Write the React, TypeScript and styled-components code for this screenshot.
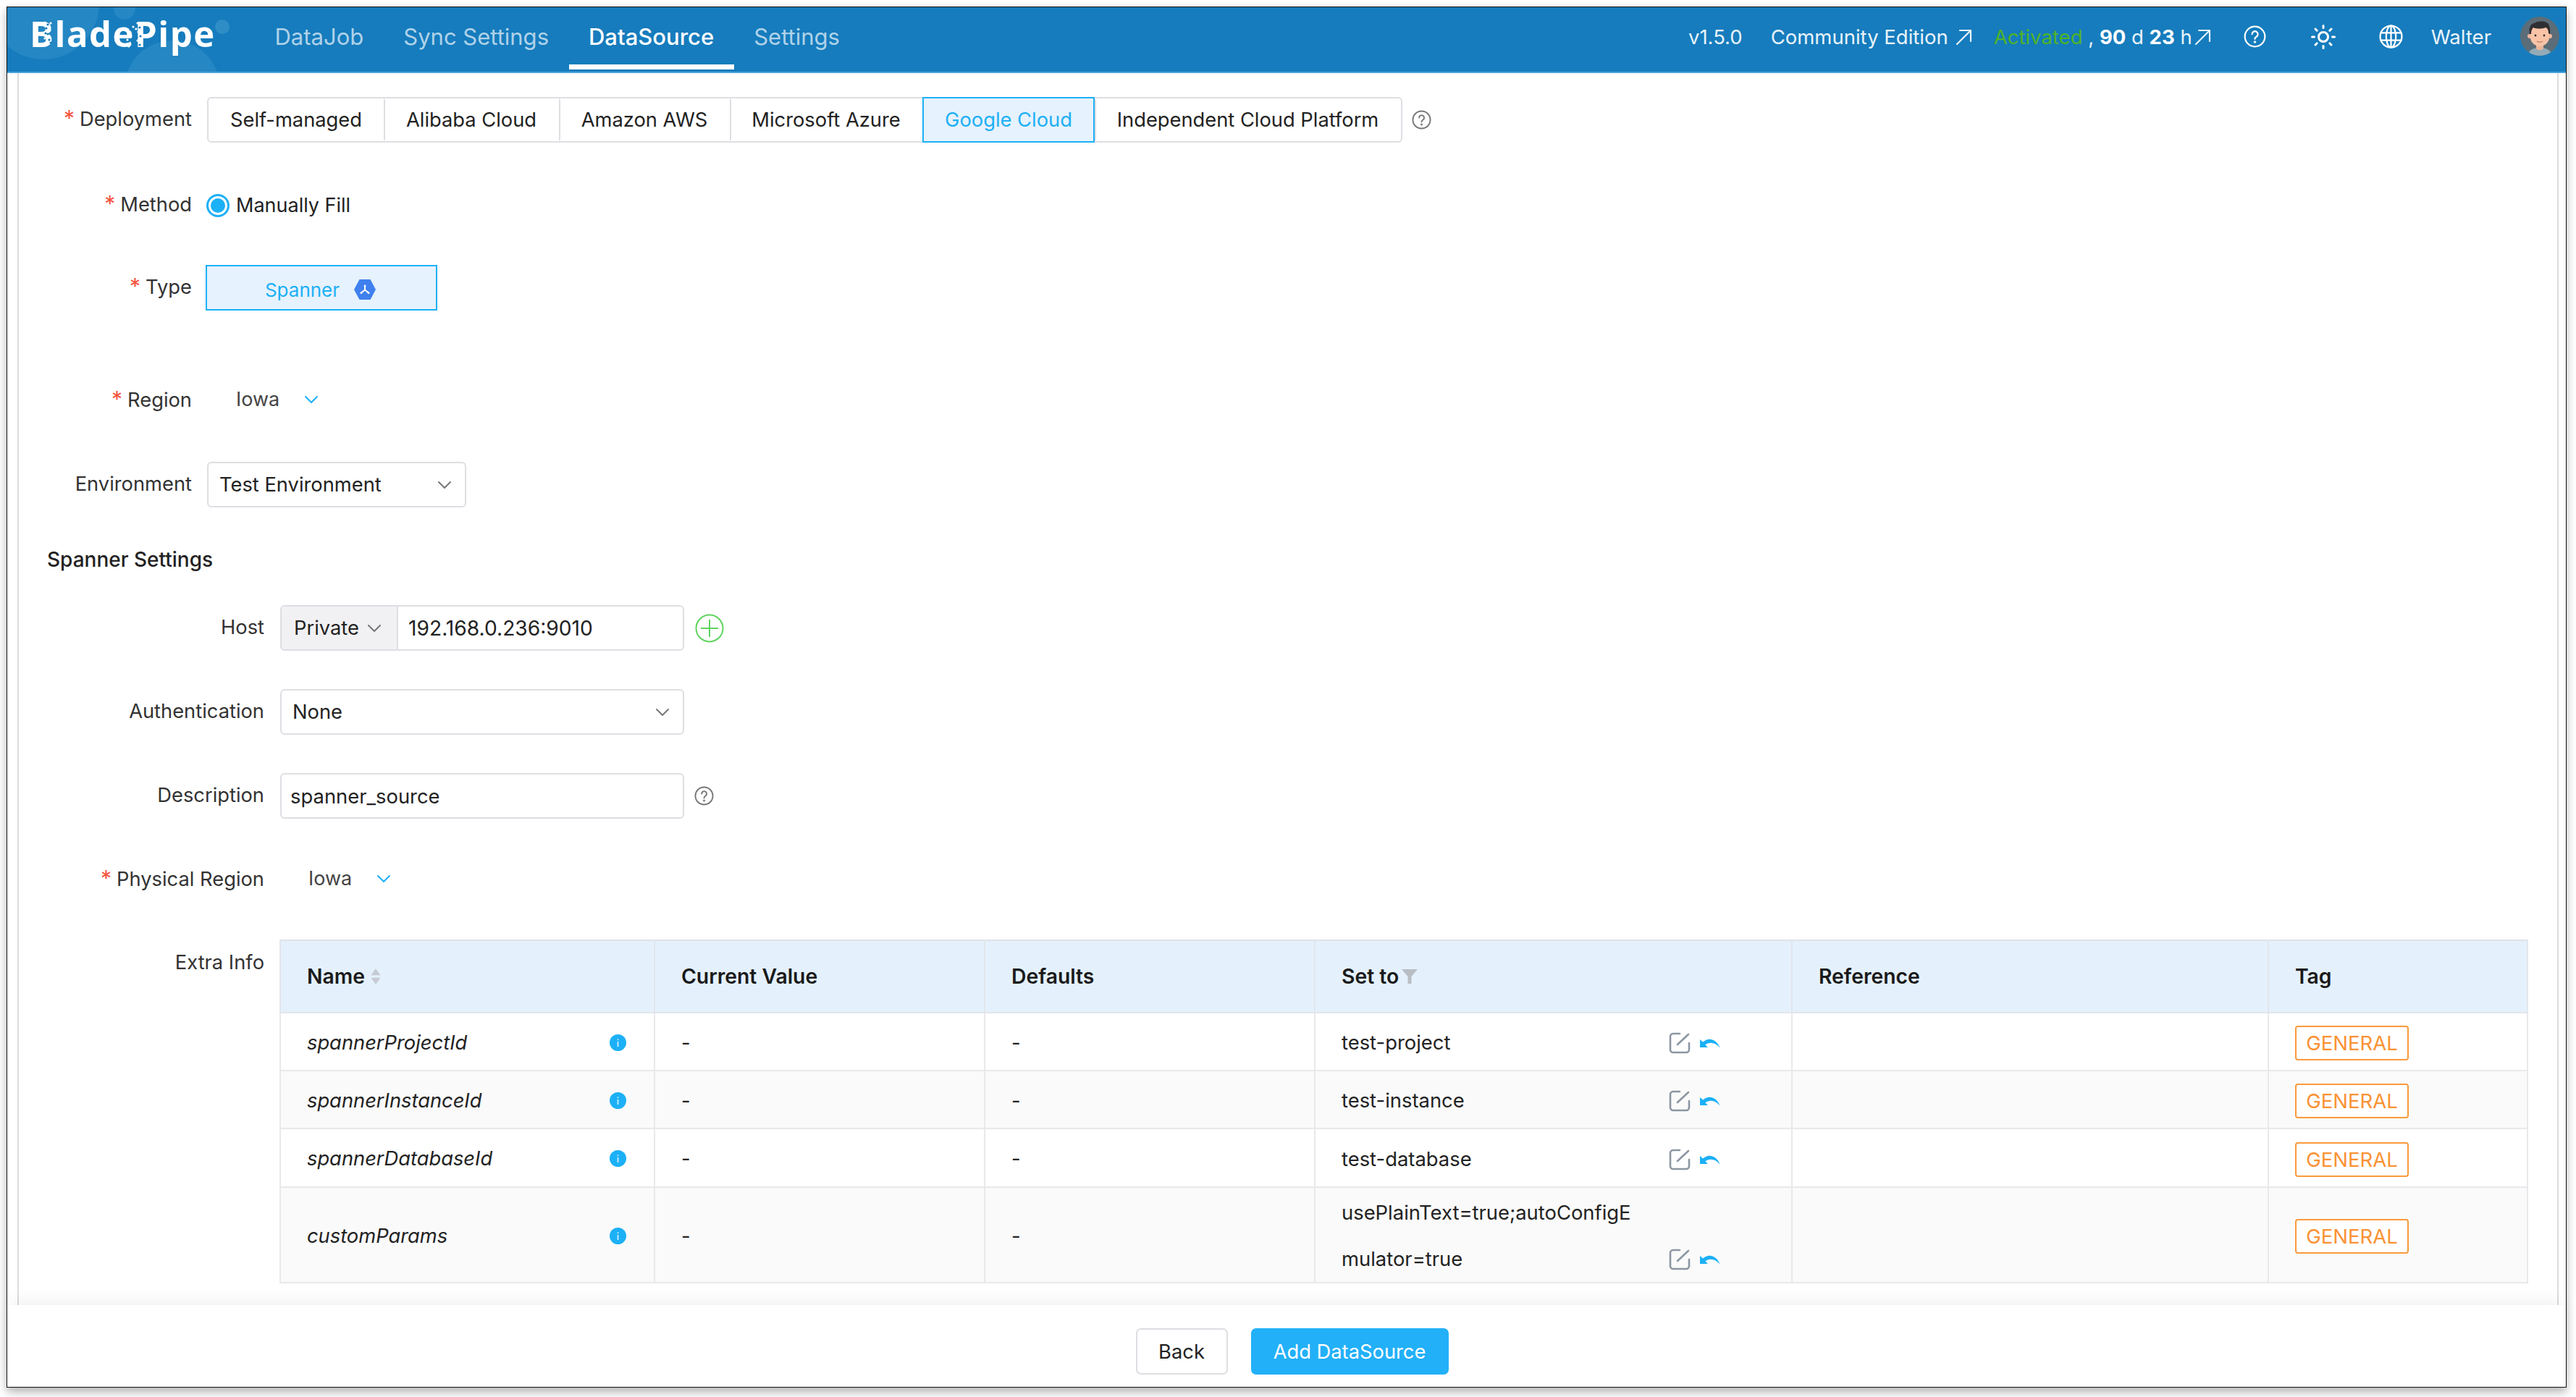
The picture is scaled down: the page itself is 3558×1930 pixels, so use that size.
import React from "react";
import styled, { createGlobalStyle } from "styled-components";

const GlobalStyle = createGlobalStyle`
  html, body { margin: 0; padding: 0; background: #fff; }
  body { width: 3558px; height: 1930px; overflow: hidden; font-family: Inter, "Liberation Sans", sans-serif; color: #222; }
  * { box-sizing: border-box; }
`;

const Page = styled.div`
  width: 3558px;
  height: 1930px;
  padding: 9px 13px 13px 9px;
`;

const Windowed = styled.div`
  width: 100%;
  height: 100%;
  display: flex;
  flex-direction: column;
  background: #fff;
  border: 1px solid #111;
  box-shadow: 0 6px 12px rgba(0, 0, 0, 0.3);
`;

const Header = styled.header`
  position: relative;
  height: 91px;
  flex: none;
  display: flex;
  align-items: flex-start;
  background: #167cbd;
  border-bottom: 2px solid #4ba3dc;
  color: #fff;
  overflow: hidden;
`;

const LogoArt = styled.svg`
  position: absolute;
  left: 0;
  top: 0;
  width: 340px;
  height: 90px;
`;

const Logo = styled.div`
  position: relative;
  width: 340px;
  height: 89px;
  padding: 6px 0 0 31px;
  flex: none;
  font-family: "Open Sans", sans-serif;
  font-weight: 700;
  font-size: 49px;
  letter-spacing: 1.5px;
  line-height: 60px;
  color: #fff;
`;

const LogoSpecks = styled.svg`
  position: absolute;
  left: 0;
  top: 0;
  width: 340px;
  height: 90px;
`;

const Nav = styled.nav`
  position: relative;
  display: flex;
  margin-left: 2px;
`;

const NavItem = styled.div<{ $active?: boolean }>`
  height: 86px;
  padding: 2px 27.5px 0;
  display: flex;
  align-items: center;
  font-size: 31px;
  font-weight: ${(p) => (p.$active ? 500 : 400)};
  color: ${(p) => (p.$active ? "#fff" : "#afd2e9")};
  border-bottom: 7px solid ${(p) => (p.$active ? "#fff" : "transparent")};
`;

const HeaderRight = styled.div`
  margin-left: auto;
  height: 89px;
  display: flex;
  align-items: center;
  padding: 0 9px 8px 0;
  font-size: 27.5px;
  color: #e8f3fa;
`;

const Version = styled.span`
  margin-right: 39px;
`;

const Edition = styled.span`
  display: flex;
  align-items: center;
  gap: 9px;
  margin-right: 30px;
`;

const License = styled.span`
  display: flex;
  align-items: center;
  gap: 2px;
  margin-right: 45px;
  white-space: pre;
  strong { font-weight: 700; color: #fff; }
  em { font-style: normal; color: #4fb327; }
`;

const HeaderIcon = styled.span<{ $gap: number }>`
  display: flex;
  margin-right: ${(p) => p.$gap}px;
  color: #fff;
`;

const UserName = styled.span`
  margin-right: 40px;
`;

const AvatarWrap = styled.span`
  display: flex;
  margin-top: -2px;
`;

const Main = styled.main`
  flex: 1;
  min-height: 0;
  margin: 0 10px 0 14px;
  border-left: 2px solid #dcdcdf;
  border-right: 2px solid #dcdcdf;
  padding-top: 33px;
  overflow: hidden;
`;

const Row = styled.div<{ $after?: number }>`
  display: flex;
  align-items: center;
  height: 63px;
  margin-bottom: ${(p) => p.$after ?? 53}px;
`;

const Label = styled.label<{ $wide?: boolean }>`
  flex: none;
  width: ${(p) => (p.$wide ? 339 : 239)}px;
  margin-right: ${(p) => (p.$wide ? 22 : 21)}px;
  margin-top: -2px;
  text-align: right;
  font-size: 27.3px;
  color: #333;
`;

const Star = styled.i`
  font-style: normal;
  font-size: 30px;
  line-height: 0;
  color: #f5533d;
  margin-right: 7px;
`;

const Segments = styled.div`
  display: flex;
  height: 63px;
  border: 2px solid #dedee3;
  border-radius: 6px;
`;

const Segment = styled.div<{ $on?: boolean; $w: number }>`
  width: ${(p) => p.$w}px;
  display: flex;
  align-items: center;
  justify-content: center;
  font-size: 27.3px;
  margin: ${(p) => (p.$on ? "-2px 0" : "0")};
  color: ${(p) => (p.$on ? "#1cb0f6" : "#222")};
  background: ${(p) => (p.$on ? "#e6f2fd" : "#fff")};
  border: 2px solid ${(p) => (p.$on ? "#1cb0f6" : "transparent")};
  border-left-color: ${(p) => (p.$on ? "#1cb0f6" : "#dedee3")};
  &:first-child { border-left-color: transparent; border-radius: 6px 0 0 6px; }
  &:last-child { border-radius: 0 6px 6px 0; }
`;

const Help = styled.span<{ $left: number }>`
  display: flex;
  margin-left: ${(p) => p.$left}px;
  color: #777;
`;

const RadioRing = styled.span`
  width: 32px;
  height: 32px;
  flex: none;
  margin-left: -1px;
  border-radius: 50%;
  border: 3px solid #1cb0f6;
  padding: 3px;
  &::after {
    content: "";
    display: block;
    width: 100%;
    height: 100%;
    border-radius: 50%;
    background: #1cb0f6;
  }
`;

const RadioText = styled.span`
  margin-left: 9px;
  font-size: 27px;
`;

const TypeBox = styled.div`
  width: 320px;
  height: 63px;
  margin-left: -2px;
  display: flex;
  align-items: center;
  justify-content: center;
  gap: 19px;
  padding: 5px 2px 0 0;
  background: #e6f2fd;
  border: 2px solid #1cb0f6;
  color: #1cb0f6;
  font-size: 26px;
`;

const Inline = styled.div<{ $left: number }>`
  display: flex;
  align-items: center;
  gap: 34px;
  margin: -4px 0 0 ${(p) => p.$left}px;
  font-size: 27px;
  color: #444;
`;

const Select = styled.div<{ $w: number }>`
  width: ${(p) => p.$w}px;
  height: 63px;
  display: flex;
  align-items: center;
  justify-content: space-between;
  padding: 0 18px 0 15px;
  background: #fff;
  border: 2px solid #dedee3;
  border-radius: 6px;
  font-size: 27.3px;
  color: #222;
`;

const SectionTitle = styled.h3`
  margin: 0 0 43px 39px;
  height: 40px;
  line-height: 40px;
  font-size: 28px;
  font-weight: 500;
  color: #222;
`;

const HostGroup = styled.div`
  width: 558px;
  height: 63px;
  display: flex;
  border: 2px solid #dedee3;
  border-radius: 6px;
  overflow: hidden;
  font-size: 27.3px;
`;

const HostAddon = styled.div`
  width: 161px;
  display: flex;
  align-items: center;
  gap: 11px;
  padding-left: 17px;
  background: #f1f1f3;
  border-right: 2px solid #dedee3;
`;

const HostValue = styled.div`
  padding-left: 14px;
  display: flex;
  align-items: center;
  font-size: 28.2px;
`;

const TextField = styled.div`
  width: 558px;
  height: 63px;
  display: flex;
  align-items: center;
  padding-left: 12px;
  border: 2px solid #dedee3;
  border-radius: 6px;
  font-size: 27.4px;
`;

const ExtraRow = styled.div`
  display: flex;
  align-items: flex-start;
`;

const ExtraLabel = styled(Label)`
  padding-top: 17px;
`;

const Table = styled.table`
  width: 3104px;
  margin-left: -1px;
  table-layout: fixed;
  border-collapse: collapse;
  font-size: 27.3px;
  border-top: 2px solid #dfe2e7;
  border-bottom: 2px solid #dfe2e7;
`;

const Th = styled.th<{ $w: number }>`
  width: ${(p) => p.$w}px;
  height: 100px;
  padding: 0 36px;
  text-align: left;
  font-size: 28.3px;
  font-weight: 600;
  color: #1a1a1a;
  background: #e4f1fd;
  border: 2px solid #e2e5ea;
  border-top: none;
`;

const HeadInner = styled.span`
  display: flex;
  align-items: center;
  gap: 6px;
`;

const Tr = styled.tr<{ $h: number; $odd?: boolean }>`
  height: ${(p) => p.$h}px;
  background: ${(p) => (p.$odd ? "#fafafa" : "#fff")};
`;

const Td = styled.td`
  padding: 2px 36px 0;
  border: 2px solid #e9e9ec;
  color: #222;
`;

const NameInner = styled.div`
  display: flex;
  align-items: center;
  justify-content: space-between;
  padding-right: 2px;
  font-style: italic;
`;

const SetInner = styled.div`
  display: flex;
  align-items: flex-end;
`;

const SetValue = styled.span`
  width: 410px;
  line-height: 64px;
  word-break: break-all;
  flex: none;
  font-size: 27.4px;
`;

const SetActions = styled.span`
  height: 64px;
  margin-left: 42px;
  display: flex;
  align-items: center;
  gap: 13px;
  padding-top: 2px;
`;

const Tag = styled.span`
  display: inline-flex;
  align-items: center;
  justify-content: center;
  width: 157px;
  height: 48px;
  margin-top: 2px;
  border: 2px solid #fa9a3c;
  border-radius: 4px;
  color: #fa9233;
  font-size: 27.5px;
  background: #fff;
`;

const Footer = styled.footer`
  height: 113px;
  flex: none;
  position: relative;
  display: flex;
  align-items: flex-start;
  justify-content: center;
  gap: 32px;
  padding: 32px 0 0 15px;
  background: #fff;
  box-shadow: 0 -10px 22px -6px rgba(0, 0, 0, 0.07);
`;

const Button = styled.button<{ $primary?: boolean; $w: number }>`
  width: ${(p) => p.$w}px;
  height: 64px;
  font-family: inherit;
  font-size: 27.3px;
  border-radius: 7px;
  color: ${(p) => (p.$primary ? "#fff" : "#222")};
  background: ${(p) => (p.$primary ? "#22b0f8" : "#fff")};
  border: 2px solid ${(p) => (p.$primary ? "#22b0f8" : "#dedee3")};
`;

const Stroke = { fill: "none", stroke: "currentColor", strokeLinecap: "round", strokeLinejoin: "round" } as const;

const Chevron = ({ color = "#777", size = 20 }: { color?: string; size?: number }) => (
  <svg width={size} height={size * 0.6} viewBox="0 0 20 12">
    <path d="M2 2l8 8 8-8" fill="none" stroke={color} strokeWidth="2" strokeLinecap="round" strokeLinejoin="round" />
  </svg>
);

const HelpIcon = ({ size = 27, width = 2 }: { size?: number; width?: number }) => (
  <svg width={size} height={size} viewBox="0 0 28 28" {...Stroke} strokeWidth={width}>
    <circle cx="14" cy="14" r="12.5" />
    <path d="M10.5 11a3.6 3.6 0 1 1 5.6 3c-1.3.9-2.1 1.6-2.1 3" />
    <circle cx="14" cy="20.8" r="0.6" />
  </svg>
);

const ArrowOut = () => (
  <svg width="24" height="24" viewBox="0 0 24 24" {...Stroke} strokeWidth="2.2">
    <path d="M3 22L21 4M7 3h15v15" />
  </svg>
);

const Sun = () => (
  <svg width="34" height="34" viewBox="0 0 34 34" {...Stroke} strokeWidth="3">
    <circle cx="17" cy="17" r="6.5" />
    <path d="M17 1.5v3M17 29.5v3M1.5 17h3M29.5 17h3M6 6l2.2 2.2M25.8 25.8L28 28M6 28l2.2-2.2M25.8 8.2L28 6" />
  </svg>
);

const Globe = () => (
  <svg width="33" height="33" viewBox="0 0 32 32" {...Stroke} strokeWidth="2.2">
    <circle cx="16" cy="16" r="14.5" />
    <ellipse cx="16" cy="16" rx="6.5" ry="14.5" />
    <path d="M16 1.5v29M2.5 11h27M2.5 21h27" />
  </svg>
);

const Avatar = () => (
  <svg width="54" height="54" viewBox="0 0 54 54">
    <defs>
      <clipPath id="avatarClip"><circle cx="27" cy="27" r="27" /></clipPath>
    </defs>
    <g clipPath="url(#avatarClip)">
      <rect width="54" height="54" fill="#5b6d78" />
      <path d="M10 54c2-9 9-11 17-11s15 2 17 11z" fill="#93abb8" />
      <path d="M22 36h10v8c-2 3-8 3-10 0z" fill="#edb598" />
      <circle cx="13" cy="27" r="3" fill="#f2b69a" />
      <circle cx="41" cy="27" r="3" fill="#f2b69a" />
      <path d="M14 20c0-6 5-9 13-9s13 3 13 9v9c0 7-7 12-13 12s-13-5-13-12z" fill="#f8c3a6" />
      <path d="M13 24c-2-9 2-15 7-15 3-3 13-3 16-1 4 1 6 8 5 16l-2-1c0-4-1-7-4-8-5 2-13 2-17 0-2 2-3 5-3 9z" fill="#2f2f33" />
      <circle cx="21" cy="26" r="1.4" fill="#333" />
      <circle cx="33" cy="26" r="1.4" fill="#333" />
      <path d="M23 34c2 1.5 6 1.5 8 0" fill="none" stroke="#c97f63" strokeWidth="1.2" />
    </g>
  </svg>
);

const Hexagon = () => (
  <svg width="32" height="30" viewBox="0 0 32 30">
    <polygon points="8.5,1 23.5,1 31,15 23.5,29 8.5,29 1,15" fill="#3f80ee" />
    <path d="M16 10v5.5M16 15.5l-4.5 3.5M16 15.5l4.5 3.5" stroke="#fff" strokeWidth="2" fill="none" strokeLinecap="round" />
    <circle cx="16" cy="10" r="1.4" fill="#fff" />
    <circle cx="11" cy="19.5" r="1.5" fill="#fff" />
    <circle cx="21" cy="19.5" r="1.5" fill="#fff" />
  </svg>
);

const PlusCircle = () => (
  <svg width="40" height="40" viewBox="0 0 40 40" fill="none" stroke="#5fd35f" strokeWidth="2">
    <circle cx="20" cy="20" r="18.5" />
    <path d="M20 8v24M8 20h24" />
  </svg>
);

const InfoDot = () => (
  <svg width="23" height="23" viewBox="0 0 23 23">
    <circle cx="11.5" cy="11.5" r="11.5" fill="#1cb0f6" />
    <rect x="10.6" y="10" width="1.8" height="7" fill="#cfeefd" />
    <rect x="10.6" y="6.4" width="1.8" height="1.8" fill="#cfeefd" />
  </svg>
);

const SortCaret = () => (
  <svg width="18" height="24" viewBox="0 0 16 22">
    <path d="M8 1l6 8.5H2zM8 21l-6-8.5h12z" fill="#c7cbd1" />
  </svg>
);

const Funnel = () => (
  <svg width="24" height="24" viewBox="0 0 24 24" style={{ marginLeft: -3 }}>
    <path d="M1 2h22l-8.5 10v10h-5V12z" fill="#b9bdc4" />
  </svg>
);

const EditIcon = () => (
  <svg width="30" height="30" viewBox="0 0 30 30" fill="none" stroke="#8c96a3" strokeWidth="2.6" strokeLinecap="round">
    <path d="M15 2H6a4 4 0 0 0-4 4v18a4 4 0 0 0 4 4h18a4 4 0 0 0 4-4V15" />
    <path d="M12 17L27 3" />
  </svg>
);

const UndoIcon = () => (
  <svg width="28" height="14" viewBox="0 0 28 14">
    <path d="M0 2v11h11L7.4 9.4C13 5.2 21 6 27.5 13.5 24.5 4 13.5-3 4 5.6z" fill="#1cb0f6" />
  </svg>
);

const deployments: [string, number, boolean?][] = [
  ["Self-managed", 242],
  ["Alibaba Cloud", 242],
  ["Amazon AWS", 236],
  ["Microsoft Azure", 266],
  ["Google Cloud", 238, true],
  ["Independent Cloud Platform", 423],
];

const specks = [
  [52, 21], [56, 24], [60, 22], [54, 29], [59, 32], [56, 37], [52, 43], [58, 45], [54, 51], [60, 49], [57, 28], [53, 36],
  [174, 27], [170, 31], [168, 39], [176, 35], [166, 45], [173, 43], [170, 51], [176, 49], [168, 54], [174, 56],
  [180, 22], [183, 28], [181, 34], [184, 40], [180, 46], [183, 52], [178, 30], [179, 41], [185, 24], [178, 53],
];

const rows = [
  { name: "spannerProjectId", value: "test-project", h: 80, odd: false },
  { name: "spannerInstanceId", value: "test-instance", h: 80, odd: true },
  { name: "spannerDatabaseId", value: "test-database", h: 81, odd: false },
  { name: "customParams", value: "usePlainText=true;autoConfigEmulator=true", h: 128, odd: true },
];

export default function App() {
  return (
    <Page>
      <GlobalStyle />
      <Windowed>
        <Header>
          <LogoArt viewBox="0 0 340 90">
            <circle cx="50" cy="-5" r="77" fill="#2587c3" />
            <circle cx="162" cy="2" r="15" fill="#2587c3" />
            <circle cx="297" cy="27" r="10" fill="#2f8dc6" />
            <circle cx="228" cy="112" r="66" fill="#2587c3" />
          </LogoArt>
          <Logo>BladePipe</Logo>
          <LogoSpecks viewBox="0 0 340 90">
            {specks.map(([x, y], i) => (
              <circle key={i} cx={x} cy={y} r={1.6} fill={i % 2 ? "#167cbd" : "#fff"} />
            ))}
          </LogoSpecks>
          <Nav>
            <NavItem>DataJob</NavItem>
            <NavItem>Sync Settings</NavItem>
            <NavItem $active>DataSource</NavItem>
            <NavItem>Settings</NavItem>
          </Nav>
          <HeaderRight>
            <Version>v1.5.0</Version>
            <Edition>Community Edition <ArrowOut /></Edition>
            <License>
              <span><em>Activated</em> , <strong>90</strong> d <strong>23</strong> h</span><ArrowOut />
            </License>
            <HeaderIcon $gap={62}><HelpIcon size={31} width={2} /></HeaderIcon>
            <HeaderIcon $gap={60}><Sun /></HeaderIcon>
            <HeaderIcon $gap={39}><Globe /></HeaderIcon>
            <UserName>Walter</UserName>
            <AvatarWrap><Avatar /></AvatarWrap>
          </HeaderRight>
        </Header>

        <Main>
          <Row $after={55}>
            <Label><Star>*</Star>Deployment</Label>
            <Segments>
              {deployments.map(([name, w, on]) => (
                <Segment key={name} $w={w} $on={on}>{name}</Segment>
              ))}
            </Segments>
            <Help $left={13}><HelpIcon /></Help>
          </Row>
          <Row $after={51}>
            <Label><Star>*</Star>Method</Label>
            <RadioRing />
            <RadioText>Manually Fill</RadioText>
          </Row>
          <Row $after={93}>
            <Label><Star>*</Star>Type</Label>
            <TypeBox>Spanner <Hexagon /></TypeBox>
          </Row>
          <Row>
            <Label><Star>*</Star>Region</Label>
            <Inline $left={40}>Iowa <Chevron color="#1cb0f6" /></Inline>
          </Row>
          <Row $after={52}>
            <Label>Environment</Label>
            <Select $w={358}>Test Environment <Chevron /></Select>
          </Row>
          <SectionTitle>Spanner Settings</SectionTitle>
          <Row>
            <Label $wide>Host</Label>
            <HostGroup>
              <HostAddon>Private <Chevron /></HostAddon>
              <HostValue>192.168.0.236:9010</HostValue>
            </HostGroup>
            <Help $left={15}><PlusCircle /></Help>
          </Row>
          <Row>
            <Label $wide>Authentication</Label>
            <Select $w={558}>None <Chevron /></Select>
          </Row>
          <Row>
            <Label $wide>Description</Label>
            <TextField>spanner_source</TextField>
            <Help $left={14}><HelpIcon /></Help>
          </Row>
          <Row $after={51}>
            <Label $wide><Star>*</Star>Physical Region</Label>
            <Inline $left={39}>Iowa <Chevron color="#1cb0f6" /></Inline>
          </Row>
          <ExtraRow>
            <ExtraLabel $wide>Extra Info</ExtraLabel>
            <Table>
              <thead>
                <tr>
                  <Th $w={517}><HeadInner>Name <SortCaret /></HeadInner></Th>
                  <Th $w={456}>Current Value</Th>
                  <Th $w={456}>Defaults</Th>
                  <Th $w={659}><HeadInner>Set to <Funnel /></HeadInner></Th>
                  <Th $w={658}>Reference</Th>
                  <Th $w={358}>Tag</Th>
                </tr>
              </thead>
              <tbody>
                {rows.map((r) => (
                  <Tr key={r.name} $h={r.h} $odd={r.odd}>
                    <Td><NameInner>{r.name} <InfoDot /></NameInner></Td>
                    <Td>-</Td>
                    <Td>-</Td>
                    <Td>
                      <SetInner>
                        <SetValue>{r.value}</SetValue>
                        <SetActions><EditIcon /><UndoIcon /></SetActions>
                      </SetInner>
                    </Td>
                    <Td />
                    <Td><Tag>GENERAL</Tag></Td>
                  </Tr>
                ))}
              </tbody>
            </Table>
          </ExtraRow>
        </Main>

        <Footer>
          <Button $w={127}>Back</Button>
          <Button $primary $w={273}>Add DataSource</Button>
        </Footer>
      </Windowed>
    </Page>
  );
}
